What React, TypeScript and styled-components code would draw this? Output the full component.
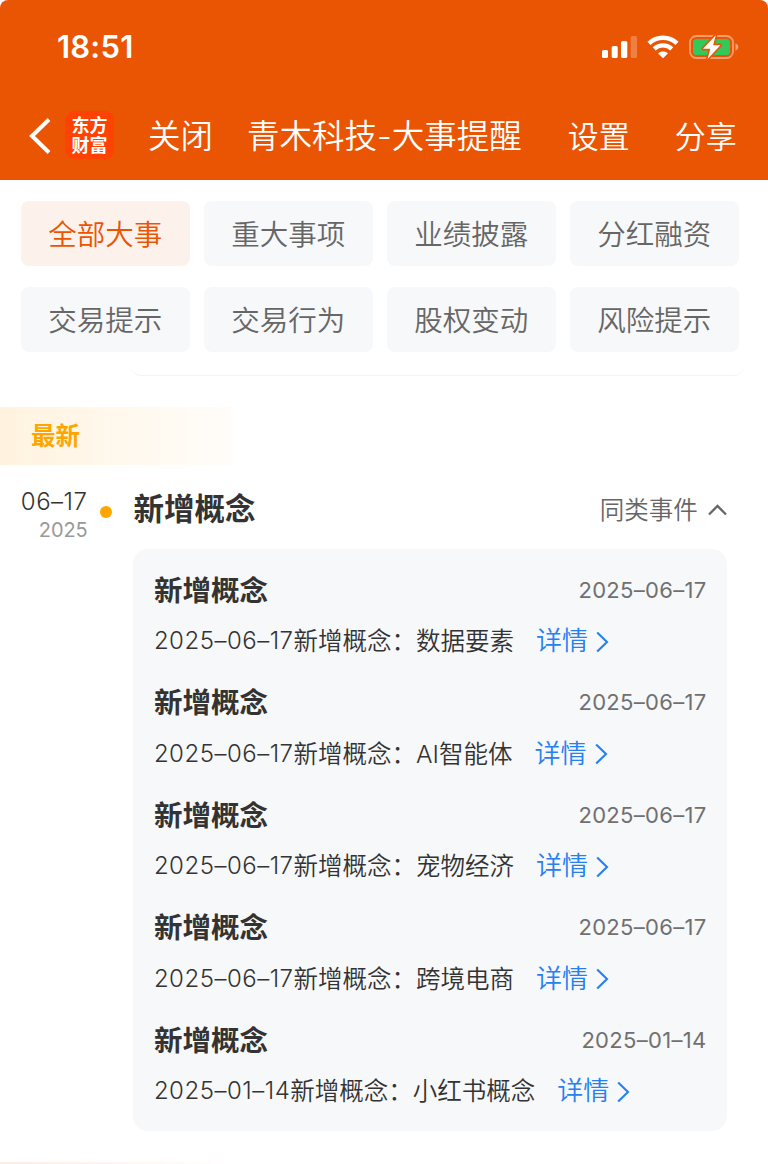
import React from "react";
import styled, { createGlobalStyle } from "styled-components";

const GlobalStyle = createGlobalStyle`
  * { box-sizing: border-box; }
  body {
    margin: 0;
    background: #fff;
    font-family: Inter, "Noto Sans CJK SC", sans-serif;
    font-weight: 400;
    color: #333;
  }
`;

const Page = styled.div`
  width: 768px;
  height: 1164px;
  overflow: hidden;
  background: #fff;
  white-space: nowrap;
`;

const Header = styled.header`
  height: 180px;
  background: #ea5504;
  border-radius: 8px 8px 0 0;
  color: #fff;
`;

const StatusBar = styled.div`
  display: flex;
  align-items: center;
  justify-content: space-between;
  height: 94px;
  padding: 0 29px 0 57px;
`;

const Clock = styled.span`
  font-size: 31px;
  line-height: 40px;
  font-weight: 600;
  letter-spacing: 0.2px;
`;

const StatusIcons = styled.div`
  display: flex;
  align-items: center;
  gap: 10px;
  svg { display: block; }
`;

const NavBar = styled.nav`
  display: flex;
  align-items: center;
  height: 84px;
  padding-left: 28px;
`;

const BackIcon = styled.svg`
  display: block;
  margin-right: 13px;
`;

const Logo = styled.div`
  display: flex;
  flex-direction: column;
  width: 49px;
  height: 48px;
  margin-top: -2px;
  padding-top: 3px;
  border-radius: 9px;
  background: #ff4200;
  font: 700 18px/20px "Noto Sans CJK SC", sans-serif;
  text-align: center;
`;

const NavText = styled.span<{ $size: number; $left: number }>`
  margin-left: ${(p) => p.$left}px;
  padding-top: 2px;
  font-size: ${(p) => p.$size}px;
  line-height: 48px;
  font-weight: 350;
`;

const FilterGrid = styled.div`
  display: grid;
  grid-template-columns: repeat(4, 169px);
  grid-auto-rows: 65px;
  gap: 21px 14px;
  padding: 21px 0 0 20.8px;
`;

const Chip = styled.button<{ $active?: boolean }>`
  border: 0;
  padding: 0 0 1px;
  border-radius: 8px;
  background: ${(p) => (p.$active ? "#fdf1eb" : "#f7f8fa")};
  color: ${(p) => (p.$active ? "#ea5504" : "#666")};
  font: 350 28.5px/40px "Noto Sans CJK SC", sans-serif;
`;

const PreviousCardEdge = styled.div`
  width: 615px;
  height: 12px;
  margin: 12px 0 0 130px;
  border-bottom: 1px solid #f0f4f8;
  border-radius: 0 0 14px 14px;
`;

const SectionTag = styled.div`
  width: 233px;
  height: 58px;
  margin-top: 31px;
  padding-left: 31px;
  background: linear-gradient(90deg, #fff3df, #fffdfa);
  color: #ffa500;
  font-size: 24.5px;
  line-height: 58px;
  font-weight: 700;
`;

const Timeline = styled.section`
  display: grid;
  grid-template-columns: 87px 46.4px 593.3px;
  padding-top: 20px;
`;

const DateColumn = styled.div`
  display: flex;
  flex-direction: column;
  align-items: flex-end;
  padding-top: 3px;
`;

const Day = styled.span`
  margin-right: -0.5px;
  font-size: 24px;
  line-height: 28px;
  font-weight: 350;
  letter-spacing: 0.5px;
`;

const Year = styled.span`
  margin-right: -0.6px;
  font-size: 20px;
  line-height: 28px;
  font-weight: 400;
  letter-spacing: -0.1px;
  color: #999;
`;

const Dot = styled.i`
  width: 12px;
  height: 12px;
  margin: 20.5px 0 0 13px;
  border-radius: 50%;
  background: #ffa500;
`;

const EventHead = styled.div`
  display: flex;
  align-items: center;
  justify-content: space-between;
  height: 48px;
`;

const EventTitle = styled.h2`
  margin: 0;
  font-size: 30.5px;
  line-height: 46px;
  font-weight: 700;
`;

const Toggle = styled.span`
  display: flex;
  align-items: center;
  gap: 10px;
  padding-top: 1px;
  font-size: 24.5px;
  line-height: 40px;
  font-weight: 350;
  color: #666;
  svg { margin-top: 1px; }
`;

const Card = styled.div`
  height: 582px;
  margin-top: 16px;
  padding: 20.5px 20.5px 0;
  border-radius: 15px;
  background: #f7f8fa;
`;

const Item = styled.article`
  height: 112.5px;
`;

const ItemHead = styled.div`
  display: flex;
  align-items: center;
  justify-content: space-between;
  height: 42px;
`;

const ItemTitle = styled.h3`
  margin: 0;
  font-size: 28.5px;
  line-height: 42px;
  font-weight: 700;
`;

const ItemDate = styled.time`
  margin: -2px -0.3px 0 0;
  font-size: 22px;
  line-height: 42px;
  font-weight: 400;
  letter-spacing: 0.3px;
  color: #707070;
`;

const ItemBody = styled.div`
  display: flex;
  align-items: center;
  height: 36px;
  margin-top: 11.5px;
  font-size: 24.5px;
  line-height: 36px;
  font-weight: 350;
`;

const DateText = styled.span`
  font-size: 24px;
  letter-spacing: 0.5px;
`;

const DetailLink = styled.a`
  display: flex;
  align-items: center;
  gap: 8px;
  margin-left: 22px;
  font-size: 26px;
  color: #2680f0;
  svg { margin-top: 1px; }
`;

const NextTag = styled.div`
  width: 233px;
  height: 2px;
  margin-top: 31px;
  background: linear-gradient(90deg, #ffece3, #fff);
`;

const filters = ["全部大事", "重大事项", "业绩披露", "分红融资", "交易提示", "交易行为", "股权变动", "风险提示"];

const items = [
  { date: "2025–06–17", concept: "数据要素" },
  { date: "2025–06–17", concept: "AI智能体" },
  { date: "2025–06–17", concept: "宠物经济" },
  { date: "2025–06–17", concept: "跨境电商" },
  { date: "2025–01–14", concept: "小红书概念" },
];

const Signal = () => (
  <svg width="35" height="22" viewBox="0 0 35 22" fill="#fff">
    <rect x="0" y="14" width="6" height="8" rx="1.6" />
    <rect x="9.7" y="10" width="6" height="12" rx="1.6" />
    <rect x="19" y="5" width="6.3" height="17" rx="1.6" />
    <rect x="28.7" y="0" width="6.3" height="22" rx="1.6" opacity=".25" />
  </svg>
);

const Wifi = () => (
  <svg width="32" height="24" viewBox="0 0 32 24" fill="none" stroke="#fff">
    <path d="M2 8.4C9.8.8 22.2.8 30 8.4" strokeWidth="4.4" />
    <path d="M7.2 13.9C12.2 9.2 19.8 9.2 24.8 13.9" strokeWidth="4.3" />
    <path d="M16 23.3l-4.9-4.9c2.7-2.4 7.1-2.4 9.8 0z" fill="#fff" stroke="none" />
  </svg>
);

const Battery = () => (
  <svg width="50" height="26" viewBox="0 0 50 26">
    <rect x="1" y="2" width="43" height="22" rx="6.5" fill="none" stroke="#fff" strokeOpacity=".42" strokeWidth="1.8" />
    <path d="M46.5 9.2c3.8 1.6 3.8 6 0 7.6z" fill="#fff" fillOpacity=".45" />
    <rect x="4" y="5" width="37" height="16" rx="3.6" fill="#34c759" />
    <path d="M26.8 1.2L14 14.8h7.3L18.6 25 31.4 11.2h-7.3z" fill="#fff" stroke="#ea5504" strokeWidth="3.2" strokeLinejoin="round" paintOrder="stroke" />
  </svg>
);

const ChevronRight = () => (
  <svg width="13" height="22" viewBox="0 0 13 22" fill="none" stroke="currentColor" strokeWidth="2.1">
    <path d="M1.2 1.5L11 11 1.2 20.5" />
  </svg>
);

const ChevronUp = () => (
  <svg width="19" height="12" viewBox="0 0 19 12" fill="none" stroke="currentColor" strokeWidth="2.3">
    <path d="M1 10.5L9.5 2 18 10.5" />
  </svg>
);

export default function App() {
  return (
    <Page>
      <GlobalStyle />
      <Header>
        <StatusBar>
          <Clock>18:51</Clock>
          <StatusIcons>
            <Signal />
            <Wifi />
            <Battery />
          </StatusIcons>
        </StatusBar>
        <NavBar>
          <BackIcon width="24" height="38" viewBox="0 0 24 38" fill="none" stroke="#fff" strokeWidth="4">
            <path d="M21 2.5L4 19l17 16.5" />
          </BackIcon>
          <Logo>
            <span>东方</span>
            <span>财富</span>
          </Logo>
          <NavText $size={32.5} $left={34}>关闭</NavText>
          <NavText $size={32.5} $left={34}>青木科技-大事提醒</NavText>
          <NavText $size={31} $left={46}>设置</NavText>
          <NavText $size={31} $left={45}>分享</NavText>
        </NavBar>
      </Header>
      <FilterGrid>
        {filters.map((name, i) => (
          <Chip key={name} $active={i === 0}>{name}</Chip>
        ))}
      </FilterGrid>
      <PreviousCardEdge />
      <SectionTag>最新</SectionTag>
      <Timeline>
        <DateColumn>
          <Day>06–17</Day>
          <Year>2025</Year>
        </DateColumn>
        <Dot />
        <div>
          <EventHead>
            <EventTitle>新增概念</EventTitle>
            <Toggle>同类事件<ChevronUp /></Toggle>
          </EventHead>
          <Card>
            {items.map((item) => (
              <Item key={item.concept}>
                <ItemHead>
                  <ItemTitle>新增概念</ItemTitle>
                  <ItemDate>{item.date}</ItemDate>
                </ItemHead>
                <ItemBody>
                  <DateText>{item.date}</DateText>
                  <span>新增概念：{item.concept}</span>
                  <DetailLink>详情<ChevronRight /></DetailLink>
                </ItemBody>
              </Item>
            ))}
          </Card>
        </div>
      </Timeline>
      <NextTag />
    </Page>
  );
}
